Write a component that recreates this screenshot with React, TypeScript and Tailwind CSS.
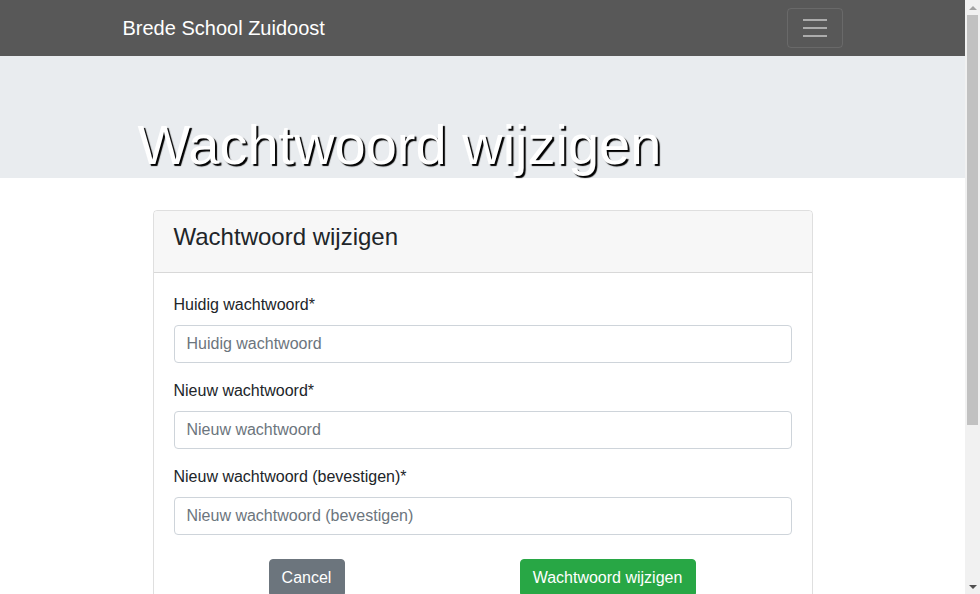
import { useState } from 'react'

const FIELDS = [
  { id: 'current', label: 'Huidig wachtwoord*', placeholder: 'Huidig wachtwoord' },
  { id: 'new', label: 'Nieuw wachtwoord*', placeholder: 'Nieuw wachtwoord' },
  { id: 'confirm', label: 'Nieuw wachtwoord (bevestigen)*', placeholder: 'Nieuw wachtwoord (bevestigen)' },
]

function Navbar() {
  return (
    <nav className="h-14 bg-[#585858] flex items-center">
      <div className="w-[720px] mx-auto flex items-center justify-between">
        <a href="#" className="text-white text-[20px] leading-[30px]">
          Brede School Zuidoost
        </a>
        <button className="w-14 h-10 rounded border border-white/10 flex flex-col items-center justify-center gap-[6px]">
          <span className="block w-6 h-[2px] bg-[#acacac]" />
          <span className="block w-6 h-[2px] bg-[#acacac]" />
          <span className="block w-6 h-[2px] bg-[#acacac]" />
        </button>
      </div>
    </nav>
  )
}

// browser scrollbar as seen in the screenshot
function Scrollbar() {
  return (
    <div className="fixed top-0 right-0 w-[15px] h-[594px] bg-[#f1f1f1] flex flex-col items-center">
      <div className="h-[15px] flex items-center justify-center">
        <span className="block w-0 h-0 border-x-[4px] border-x-transparent border-b-[4px] border-b-[#a3a3a3]" />
      </div>
      <div className="w-[11px] h-[410px] bg-[#c1c1c1]" />
      <div className="flex-1" />
      <div className="h-[15px] flex items-center justify-center">
        <span className="block w-0 h-0 border-x-[4px] border-x-transparent border-t-[4px] border-t-[#505050]" />
      </div>
    </div>
  )
}

export default function App() {
  const [values, setValues] = useState<Record<string, string>>({})

  return (
    <div className="w-[965px] min-h-[820px] bg-white text-[#212529] font-['Liberation_Sans',Arial,sans-serif]">
      <Navbar />

      {/* Jumbotron */}
      <div className="h-[122px] bg-[#e9ecef]">
        <div className="w-[720px] mx-auto px-[15px] pt-[55px]">
          <h1 className="text-[56px] leading-[1.2] text-white whitespace-nowrap [text-shadow:2px_2px_1px_#000]">
            Wachtwoord wijzigen
          </h1>
        </div>
      </div>

      <div className="w-[660px] mx-auto mt-8 mb-[200px] border border-black/[0.125] rounded">
        <div className="bg-[#f7f7f7] px-5 pt-3 pb-5 border-b border-black/[0.125] rounded-t">
          <h4 className="text-[24px] leading-[28.8px]">Wachtwoord wijzigen</h4>
        </div>
        <div className="p-5">
          {FIELDS.map((f) => (
            <div key={f.id} className="mb-4">
              <label htmlFor={f.id} className="block text-[16px] leading-6 mb-2">
                {f.label}
              </label>
              <input
                id={f.id}
                type="password"
                placeholder={f.placeholder}
                value={values[f.id] ?? ''}
                onChange={(e) => setValues((v) => ({ ...v, [f.id]: e.target.value }))}
                className="block w-full h-[38px] px-3 py-[6px] text-[16px] border border-[#ced4da] rounded placeholder:text-[#6c757d] outline-none"
              />
            </div>
          ))}
          <div className="flex justify-between pl-[95px] pr-[96px] pt-2">
            <button className="h-[38px] w-[76px] text-[16px] text-white bg-[#6c757d] border border-[#6c757d] rounded">
              Cancel
            </button>
            <button className="h-[38px] w-[176px] text-[16px] text-white bg-[#28a745] border border-[#28a745] rounded">
              Wachtwoord wijzigen
            </button>
          </div>
        </div>
      </div>

      <Scrollbar />
    </div>
  )
}
